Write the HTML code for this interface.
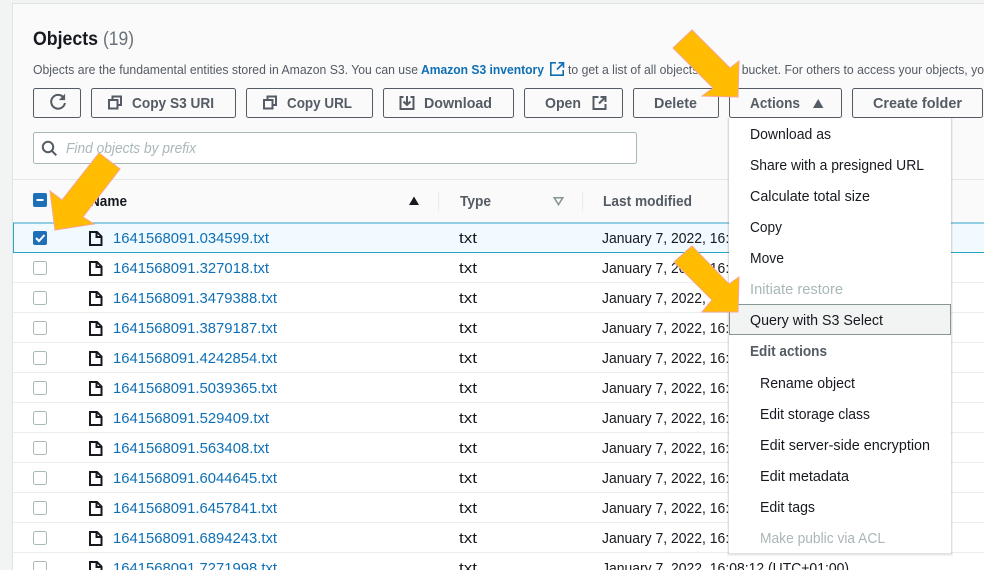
<!DOCTYPE html>
<html lang="en"><head><meta charset="utf-8"><title>Objects</title>
<style>
html,body{margin:0;padding:0;width:984px;height:570px;overflow:hidden;background:#f2f3f3}
svg{display:block;filter:blur(.3px)}
text{font-family:"Liberation Sans",sans-serif;white-space:pre}
.btn{fill:#fafafa;stroke:#545b64;stroke-width:1}
.bt{font-size:15px;font-weight:bold;fill:#545b64}
.ic{fill:none;stroke:#545b64;stroke-width:2}
.l{font-size:15px;fill:#0f6fb5}
.t{font-size:15px;fill:#16191f}
.m{font-size:15px;fill:#16191f}
.d{font-size:15px;fill:#aab7b8}
.cb{fill:#fff;stroke:#aab7b8;stroke-width:1}
.f{fill:none;stroke:#16191f;stroke-width:2}
.ln{stroke:#eaeded;stroke-width:1}
.ar{fill:#ffbc00;stroke:#f7a58f;stroke-width:1}
</style></head><body>
<svg width="984" height="570" viewBox="0 0 984 570" xmlns="http://www.w3.org/2000/svg">
<rect width="984" height="570" fill="#f2f3f3"/>
<rect x="12.5" y="3.5" width="972" height="567" fill="#fafafa" stroke="#dfe3e3"/>
<rect x="13" y="180" width="971" height="390" fill="#fff"/>
<rect x="13" y="180" width="971" height="43" fill="#fafafa"/>
<line x1="13" y1="179.5" x2="984" y2="179.5" stroke="#e4e7e7"/>

<text x="33" y="45" font-size="19" font-weight="bold" fill="#16191f" textLength="65" lengthAdjust="spacingAndGlyphs">Objects</text>
<text x="103" y="45" font-size="19" fill="#687078" textLength="31" lengthAdjust="spacingAndGlyphs">(19)</text>

<text x="33" y="74" font-size="12.5" fill="#545b64" textLength="385" lengthAdjust="spacingAndGlyphs">Objects are the fundamental entities stored in Amazon S3. You can use</text>
<text x="421" y="74" font-size="12.5" font-weight="bold" fill="#0f6fb5" textLength="123" lengthAdjust="spacingAndGlyphs">Amazon S3 inventory</text>
<g fill="none" stroke="#0f6fb5" stroke-width="1.6"><path d="M556 62.8h-5.200v12.400h12.400v-5.200"/><path d="M557 69.500l6-6M558.500 62.800h5v5"/></g>
<text x="568" y="74" font-size="12.5" fill="#545b64" textLength="416" lengthAdjust="spacingAndGlyphs">to get a list of all objects in your bucket. For others to access your objects, yo</text>

<!-- buttons -->
<rect class="btn" x="33.500" y="88.500" width="47" height="29" rx="2"/>
<path class="ic" d="M63.600 97.600a6.900 6.900 0 1 0 1.300 5.400"/><path fill="#545b64" stroke="#545b64" stroke-width="1" d="M64.600 95v4.600h-4.600z"/>

<rect class="btn" x="91.500" y="88.500" width="144" height="29" rx="2"/>
<path class="ic" d="M109 100h8.500v8.500h-8.500z"/><path class="ic" d="M112.500 100v-3.500h8.500v8.500h-3.500"/>
<text class="bt" x="132" y="108" textLength="82" lengthAdjust="spacingAndGlyphs">Copy S3 URI</text>

<rect class="btn" x="246.500" y="88.500" width="126" height="29" rx="2"/>
<path class="ic" d="M264 100h8.500v8.500h-8.500z"/><path class="ic" d="M267.500 100v-3.500h8.500v8.500h-3.500"/>
<text class="bt" x="287" y="108" textLength="65" lengthAdjust="spacingAndGlyphs">Copy URL</text>

<rect class="btn" x="383.500" y="88.500" width="130" height="29" rx="2"/>
<path class="ic" d="M403.500 97h-3v12h13v-12h-3"/><path class="ic" d="M407 96v9"/><path class="ic" d="M403.500 101.500l3.500 3.500 3.500-3.500"/>
<text class="bt" x="424" y="108" textLength="68" lengthAdjust="spacingAndGlyphs">Download</text>

<rect class="btn" x="524.500" y="88.500" width="98" height="29" rx="2"/>
<text class="bt" x="545" y="108" textLength="36" lengthAdjust="spacingAndGlyphs">Open</text>
<path class="ic" d="M598.500 97h-5v12h12v-5"/><path class="ic" d="M599 103.500l6-6"/><path class="ic" d="M600.500 97h5v5"/>

<rect class="btn" x="633.500" y="88.500" width="85" height="29" rx="2"/>
<text class="bt" x="654" y="108" textLength="43" lengthAdjust="spacingAndGlyphs">Delete</text>

<rect class="btn" x="729.500" y="88.500" width="112" height="29" rx="2"/>
<text class="bt" x="750" y="108" textLength="50" lengthAdjust="spacingAndGlyphs">Actions</text>
<path fill="#545b64" d="M813 108l5.200-9 5.200 9z"/>

<rect class="btn" x="852.500" y="88.500" width="130" height="29" rx="2"/>
<text class="bt" x="873" y="108" textLength="89" lengthAdjust="spacingAndGlyphs">Create folder</text>

<!-- search -->
<rect x="33.500" y="132.500" width="603" height="31" rx="2" fill="#fff" stroke="#aab7b8"/>
<circle cx="48" cy="147" r="5.200" fill="none" stroke="#545b64" stroke-width="2"/>
<path d="M52 151l4.300 4.300" stroke="#545b64" stroke-width="2" fill="none"/>
<text x="66" y="153" font-size="14.5" font-style="italic" fill="#aab7b8" textLength="130" lengthAdjust="spacingAndGlyphs">Find objects by prefix</text>

<!-- table header -->
<rect x="33" y="193" width="14" height="14" rx="2" fill="#1f6fb8"/>
<path d="M36.500 200h7" stroke="#fff" stroke-width="2"/>
<text x="90" y="206" font-size="15" font-weight="bold" fill="#16191f" textLength="37" lengthAdjust="spacingAndGlyphs">Name</text>
<path fill="#16191f" d="M409 205l5-8.500 5 8.500z"/>
<line x1="438.500" y1="191" x2="438.500" y2="212" class="ln"/>
<text x="460" y="206" font-size="15" font-weight="bold" fill="#545b64" textLength="31" lengthAdjust="spacingAndGlyphs">Type</text>
<path fill="none" stroke="#879596" stroke-width="1.500" d="M554.200 197.700h8.600l-4.300 7z"/>
<line x1="582.500" y1="191" x2="582.500" y2="212" class="ln"/>
<text x="603" y="206" font-size="15" font-weight="bold" fill="#545b64" textLength="89" lengthAdjust="spacingAndGlyphs">Last modified</text>

<!-- row lines -->
<rect x="13.500" y="223" width="971" height="29.500" fill="#f1faff" stroke="#2ea3c9"/>
<g class="ln">
<line x1="13" y1="282.500" x2="984" y2="282.500"/><line x1="13" y1="312.500" x2="984" y2="312.500"/><line x1="13" y1="342.500" x2="984" y2="342.500"/><line x1="13" y1="372.500" x2="984" y2="372.500"/><line x1="13" y1="402.500" x2="984" y2="402.500"/><line x1="13" y1="432.500" x2="984" y2="432.500"/><line x1="13" y1="462.500" x2="984" y2="462.500"/><line x1="13" y1="492.500" x2="984" y2="492.500"/><line x1="13" y1="522.500" x2="984" y2="522.500"/><line x1="13" y1="552.500" x2="984" y2="552.500"/>
</g>

<!-- checkboxes -->
<rect x="33" y="231" width="14" height="14" rx="2" fill="#1f6fb8"/>
<path d="M36 238l3 3 5.500-6" stroke="#fff" stroke-width="2" fill="none"/>
<rect class="cb" x="33.500" y="261.500" width="13" height="13" rx="2"/>
<rect class="cb" x="33.500" y="291.500" width="13" height="13" rx="2"/>
<rect class="cb" x="33.500" y="321.500" width="13" height="13" rx="2"/>
<rect class="cb" x="33.500" y="351.500" width="13" height="13" rx="2"/>
<rect class="cb" x="33.500" y="381.500" width="13" height="13" rx="2"/>
<rect class="cb" x="33.500" y="411.500" width="13" height="13" rx="2"/>
<rect class="cb" x="33.500" y="441.500" width="13" height="13" rx="2"/>
<rect class="cb" x="33.500" y="471.500" width="13" height="13" rx="2"/>
<rect class="cb" x="33.500" y="501.500" width="13" height="13" rx="2"/>
<rect class="cb" x="33.500" y="531.500" width="13" height="13" rx="2"/>
<rect class="cb" x="33.500" y="561.500" width="13" height="13" rx="2"/>

<!-- file icons -->
<defs><path id="fi" class="f" d="M90 232h7l4.500 4.500v8.500h-11.500zM96.500 232v5h5"/></defs>
<use href="#fi"/><use href="#fi" y="30"/><use href="#fi" y="60"/><use href="#fi" y="90"/><use href="#fi" y="120"/><use href="#fi" y="150"/><use href="#fi" y="180"/><use href="#fi" y="210"/><use href="#fi" y="240"/><use href="#fi" y="270"/><use href="#fi" y="300"/><use href="#fi" y="330"/>

<!-- rows -->
<text class="l" x="113" y="243" textLength="156" lengthAdjust="spacingAndGlyphs">1641568091.034599.txt</text>
<text class="l" x="113" y="273" textLength="156" lengthAdjust="spacingAndGlyphs">1641568091.327018.txt</text>
<text class="l" x="113" y="303" textLength="164" lengthAdjust="spacingAndGlyphs">1641568091.3479388.txt</text>
<text class="l" x="113" y="333" textLength="164" lengthAdjust="spacingAndGlyphs">1641568091.3879187.txt</text>
<text class="l" x="113" y="363" textLength="164" lengthAdjust="spacingAndGlyphs">1641568091.4242854.txt</text>
<text class="l" x="113" y="393" textLength="164" lengthAdjust="spacingAndGlyphs">1641568091.5039365.txt</text>
<text class="l" x="113" y="423" textLength="156" lengthAdjust="spacingAndGlyphs">1641568091.529409.txt</text>
<text class="l" x="113" y="453" textLength="156" lengthAdjust="spacingAndGlyphs">1641568091.563408.txt</text>
<text class="l" x="113" y="483" textLength="164" lengthAdjust="spacingAndGlyphs">1641568091.6044645.txt</text>
<text class="l" x="113" y="513" textLength="164" lengthAdjust="spacingAndGlyphs">1641568091.6457841.txt</text>
<text class="l" x="113" y="543" textLength="164" lengthAdjust="spacingAndGlyphs">1641568091.6894243.txt</text>
<text class="l" x="113" y="573" textLength="164" lengthAdjust="spacingAndGlyphs">1641568091.7271998.txt</text>

<text class="t" x="459" y="243" textLength="18" lengthAdjust="spacingAndGlyphs">txt</text>
<text class="t" x="459" y="273" textLength="18" lengthAdjust="spacingAndGlyphs">txt</text>
<text class="t" x="459" y="303" textLength="18" lengthAdjust="spacingAndGlyphs">txt</text>
<text class="t" x="459" y="333" textLength="18" lengthAdjust="spacingAndGlyphs">txt</text>
<text class="t" x="459" y="363" textLength="18" lengthAdjust="spacingAndGlyphs">txt</text>
<text class="t" x="459" y="393" textLength="18" lengthAdjust="spacingAndGlyphs">txt</text>
<text class="t" x="459" y="423" textLength="18" lengthAdjust="spacingAndGlyphs">txt</text>
<text class="t" x="459" y="453" textLength="18" lengthAdjust="spacingAndGlyphs">txt</text>
<text class="t" x="459" y="483" textLength="18" lengthAdjust="spacingAndGlyphs">txt</text>
<text class="t" x="459" y="513" textLength="18" lengthAdjust="spacingAndGlyphs">txt</text>
<text class="t" x="459" y="543" textLength="18" lengthAdjust="spacingAndGlyphs">txt</text>
<text class="t" x="459" y="573" textLength="18" lengthAdjust="spacingAndGlyphs">txt</text>

<text class="t" x="602" y="243" textLength="247" lengthAdjust="spacingAndGlyphs">January 7, 2022, 16:08:12 (UTC+01:00)</text>
<text class="t" x="602" y="273" textLength="247" lengthAdjust="spacingAndGlyphs">January 7, 2022, 16:08:12 (UTC+01:00)</text>
<text class="t" x="602" y="303" textLength="247" lengthAdjust="spacingAndGlyphs">January 7, 2022, 16:08:12 (UTC+01:00)</text>
<text class="t" x="602" y="333" textLength="247" lengthAdjust="spacingAndGlyphs">January 7, 2022, 16:08:12 (UTC+01:00)</text>
<text class="t" x="602" y="363" textLength="247" lengthAdjust="spacingAndGlyphs">January 7, 2022, 16:08:12 (UTC+01:00)</text>
<text class="t" x="602" y="393" textLength="247" lengthAdjust="spacingAndGlyphs">January 7, 2022, 16:08:12 (UTC+01:00)</text>
<text class="t" x="602" y="423" textLength="247" lengthAdjust="spacingAndGlyphs">January 7, 2022, 16:08:12 (UTC+01:00)</text>
<text class="t" x="602" y="453" textLength="247" lengthAdjust="spacingAndGlyphs">January 7, 2022, 16:08:12 (UTC+01:00)</text>
<text class="t" x="602" y="483" textLength="247" lengthAdjust="spacingAndGlyphs">January 7, 2022, 16:08:12 (UTC+01:00)</text>
<text class="t" x="602" y="513" textLength="247" lengthAdjust="spacingAndGlyphs">January 7, 2022, 16:08:12 (UTC+01:00)</text>
<text class="t" x="602" y="543" textLength="247" lengthAdjust="spacingAndGlyphs">January 7, 2022, 16:08:12 (UTC+01:00)</text>
<text class="t" x="602" y="573" textLength="247" lengthAdjust="spacingAndGlyphs">January 7, 2022, 16:08:12 (UTC+01:00)</text>

<!-- menu -->
<rect x="727" y="118" width="226" height="438" fill="#000" opacity=".05"/>
<rect x="728" y="118" width="224" height="436.500" fill="#000" opacity=".08"/>
<rect x="729" y="118" width="222" height="435" fill="#fff"/>
<rect x="729.500" y="304.500" width="221" height="30" fill="#f2f3f3" stroke="#879596"/>
<text class="m" x="750" y="139" textLength="81" lengthAdjust="spacingAndGlyphs">Download as</text>
<text class="m" x="750" y="170" textLength="174" lengthAdjust="spacingAndGlyphs">Share with a presigned URL</text>
<text class="m" x="750" y="201" textLength="120" lengthAdjust="spacingAndGlyphs">Calculate total size</text>
<text class="m" x="750" y="232" textLength="32" lengthAdjust="spacingAndGlyphs">Copy</text>
<text class="m" x="750" y="263" textLength="34" lengthAdjust="spacingAndGlyphs">Move</text>
<text class="d" x="750" y="294" textLength="93" lengthAdjust="spacingAndGlyphs">Initiate restore</text>
<text class="m" x="750" y="325" textLength="133" lengthAdjust="spacingAndGlyphs">Query with S3 Select</text>
<text x="750" y="356" font-size="15" font-weight="bold" fill="#545b64" textLength="77" lengthAdjust="spacingAndGlyphs">Edit actions</text>
<text class="m" x="760" y="388" textLength="95" lengthAdjust="spacingAndGlyphs">Rename object</text>
<text class="m" x="760" y="419" textLength="110" lengthAdjust="spacingAndGlyphs">Edit storage class</text>
<text class="m" x="760" y="450" textLength="170" lengthAdjust="spacingAndGlyphs">Edit server-side encryption</text>
<text class="m" x="760" y="481" textLength="89" lengthAdjust="spacingAndGlyphs">Edit metadata</text>
<text class="m" x="760" y="512" textLength="55" lengthAdjust="spacingAndGlyphs">Edit tags</text>
<text class="d" x="760" y="543" textLength="125" lengthAdjust="spacingAndGlyphs">Make public via ACL</text>

<!-- arrows -->
<polygon class="ar" points="692,30 730,68 739,61 738,97 702,96 713,88 673,48"/>
<polygon class="ar" points="99,153 120,169 83,217 94,224 55,230 50,191 62,200"/>
<polygon class="ar" points="692,246 729,284 739,277 738,312 702,312 712,300 674,262"/>
</svg>
</body></html>
